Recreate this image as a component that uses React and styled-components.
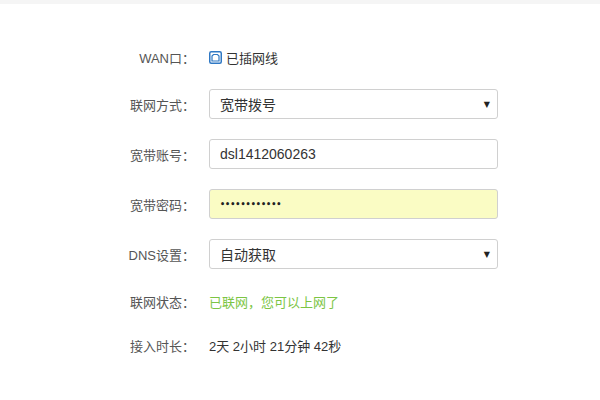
import React from 'react';
import styled, { createGlobalStyle } from 'styled-components';

const GlobalStyle = createGlobalStyle`
  html, body {
    margin: 0;
    padding: 0;
    background: #fff;
  }
  body {
    font-family: "Microsoft YaHei", "Liberation Sans", "Noto Sans CJK SC", sans-serif;
  }
`;

const Page = styled.div`
  width: 600px;
  height: 400px;
  overflow: hidden;
  border-top: 4px solid #f5f5f5;
  box-sizing: border-box;
`;

const Form = styled.div`
  display: flex;
  flex-direction: column;
  gap: 20px;
  padding-top: 41px;
`;

const Row = styled.div`
  display: grid;
  grid-template-columns: 195px 289px;
  column-gap: 14px;
  align-items: center;
  height: ${props => (props.compact ? 24 : 30)}px;
`;

const Label = styled.div`
  text-align: right;
  font-size: 13px;
  color: #555;
  white-space: nowrap;
`;

const Value = styled.div`
  display: flex;
  align-items: center;
  gap: 4px;
  font-size: 13px;
  color: ${props => props.color || '#333'};
  white-space: nowrap;
`;

const Field = styled.div`
  position: relative;
  box-sizing: border-box;
  height: 30px;
  display: flex;
  align-items: center;
  padding: 0 10px;
  border: 1px solid #d0d0d0;
  border-radius: 3px;
  background: ${props => (props.autofill ? '#fafcc4' : '#fff')};
  font-size: 14px;
  color: #333;
`;

const Dots = styled.span`
  font-size: 8px;
  font-weight: bold;
  color: #222;
  font-family: "DejaVu Sans", sans-serif;
`;

const Caret = styled.span`
  position: absolute;
  right: 7px;
  top: 50%;
  transform: translateY(-45%);
  font-size: 8px;
  color: #222;
  font-family: "DejaVu Sans", sans-serif;
`;

const PortIcon = () => (
  <svg width="13" height="13" viewBox="0 0 13 13">
    <rect x="0.75" y="0.75" width="11.5" height="11.5" rx="1.5" fill="none" stroke="#2f78c4" strokeWidth="1.5" />
    <path d="M3 10 V5 L4.5 3.5 H8.5 L10 5 V10 Z" fill="none" stroke="#2f78c4" strokeWidth="1.2" />
  </svg>
);

const App = () => (
  <Page>
    <GlobalStyle />
    <Form>
      <Row compact>
        <Label>WAN口：</Label>
        <Value>
          <PortIcon />
          已插网线
        </Value>
      </Row>
      <Row>
        <Label>联网方式：</Label>
        <Field>
          宽带拨号
          <Caret>▼</Caret>
        </Field>
      </Row>
      <Row>
        <Label>宽带账号：</Label>
        <Field>dsl1412060263</Field>
      </Row>
      <Row>
        <Label>宽带密码：</Label>
        <Field autofill>
          <Dots>••••••••••••</Dots>
        </Field>
      </Row>
      <Row>
        <Label>DNS设置：</Label>
        <Field>
          自动获取
          <Caret>▼</Caret>
        </Field>
      </Row>
      <Row compact>
        <Label>联网状态：</Label>
        <Value color="#7cc544">已联网，您可以上网了</Value>
      </Row>
      <Row compact>
        <Label>接入时长：</Label>
        <Value>2天 2小时 21分钟 42秒</Value>
      </Row>
    </Form>
  </Page>
);

export default App;
